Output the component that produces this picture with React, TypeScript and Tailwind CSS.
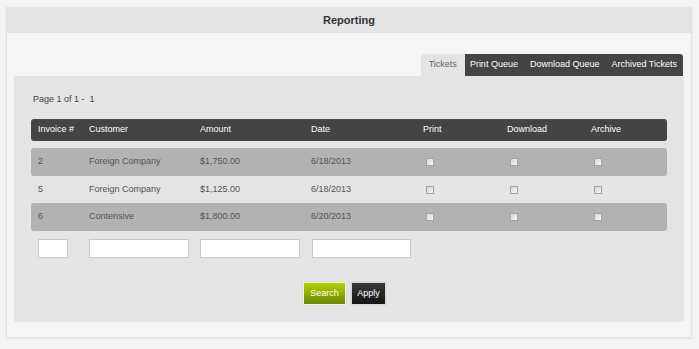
const font = { fontFamily: '"Liberation Sans", Arial, sans-serif' };

interface Ticket {
  invoice: string;
  customer: string;
  amount: string;
  date: string;
}

const tickets: Ticket[] = [
  { invoice: '2', customer: 'Foreign Company', amount: '$1,750.00', date: '6/18/2013' },
  { invoice: '5', customer: 'Foreign Company', amount: '$1,125.00', date: '6/18/2013' },
  { invoice: '6', customer: 'Contensive', amount: '$1,800.00', date: '6/20/2013' },
];

const tabs = ['Print Queue', 'Download Queue', 'Archived Tickets'];

function Box() {
  return (
    <span className="block w-[8px] h-[8px] ml-[3px] border border-[#a4a4a4] bg-gradient-to-br from-[#d8d8d8] to-[#f4f4f4]" />
  );
}

export default function App() {
  return (
    <div className="w-[699px] h-[349px] bg-[#f4f3f1] pt-[7px] pl-[6px]" style={font}>
      <div className="w-[686px] h-[331px] bg-[#f6f5f3] border-x border-b border-[#e2e1df] shadow-[0_1px_2px_rgba(0,0,0,0.06)]">
        {/* Header */}
        <div className="h-[26px] bg-[#e4e4e4] flex items-center justify-center text-[11px] font-bold text-[#333]">
          Reporting
        </div>

        <div className="px-[7px] pt-[21px]">
          {/* Tabs */}
          <div className="flex justify-end pr-[1px] h-[22px] text-[9px]">
            <div className="bg-[#e4e4e4] text-[#666] px-[8px] flex items-center rounded-tl-[2px]">Tickets</div>
            <div className="bg-[#444] text-white flex items-center rounded-tr-[3px] pl-[5px] pr-[6px] gap-[12px]">
              {tabs.map((t) => (
                <span key={t}>{t}</span>
              ))}
            </div>
          </div>

          {/* Content box */}
          <div className="h-[246px] bg-[#e4e4e4] rounded-b-[3px] px-[17px] pt-[18px]">
            <div className="text-[9px] text-[#444] pl-[2px] h-[11px] leading-[11px]">Page 1 of 1 -&nbsp; 1</div>

            <div className="mt-[14px] text-[9px]">
              <div className="h-[22px] bg-[#444] rounded-[3px] text-white grid grid-cols-[51px_111px_111px_112px_84px_84px_82px] items-center">
                <span className="pl-[7px]">Invoice #</span>
                <span className="pl-[7px]">Customer</span>
                <span className="pl-[7px]">Amount</span>
                <span className="pl-[7px]">Date</span>
                <span className="pl-[7px]">Print</span>
                <span className="pl-[7px]">Download</span>
                <span className="pl-[7px]">Archive</span>
              </div>

              <div className="mt-[7px] flex flex-col gap-[1px]">
                {tickets.map((t, i) => (
                  <div
                    key={t.invoice}
                    className={
                      i % 2 === 0
                        ? 'h-[28px] bg-[#b2b2b2] rounded-[3px] text-[#555] grid grid-cols-[51px_111px_111px_112px_84px_84px_82px] items-center'
                        : 'h-[25px] text-[#555] grid grid-cols-[51px_111px_111px_112px_84px_84px_82px] items-center'
                    }
                  >
                    <span className="pl-[7px]">{t.invoice}</span>
                    <span className="pl-[7px]">{t.customer}</span>
                    <span className="pl-[7px]">{t.amount}</span>
                    <span className="pl-[7px]">{t.date}</span>
                    <span className="pl-[7px]"><Box /></span>
                    <span className="pl-[7px]"><Box /></span>
                    <span className="pl-[7px]"><Box /></span>
                  </div>
                ))}
              </div>

              {/* Filter inputs */}
              <div className="mt-[8px] flex h-[19px]">
                <input className="ml-[7px] w-[30px] h-[19px] bg-white border border-[#c9c9c9] outline-none" />
                <input className="ml-[21px] w-[100px] h-[19px] bg-white border border-[#c9c9c9] outline-none" />
                <input className="ml-[11px] w-[100px] h-[19px] bg-white border border-[#c9c9c9] outline-none" />
                <input className="ml-[12px] w-[99px] h-[19px] bg-white border border-[#c9c9c9] outline-none" />
              </div>

              {/* Buttons */}
              <div className="mt-[24px] flex justify-center gap-[5px] pr-[9px]">
                <button className="w-[43px] h-[23px] text-[9px] text-white border border-[#f0f4d8] bg-gradient-to-b from-[#b5d000] to-[#6c8a00] shadow-[0_0_1px_rgba(0,0,0,0.2)]">
                  Search
                </button>
                <button className="w-[35px] h-[23px] text-[9px] text-white border border-[#d8d8d8] bg-gradient-to-b from-[#3a3a3a] to-[#161616] shadow-[0_0_1px_rgba(0,0,0,0.2)]">
                  Apply
                </button>
              </div>
            </div>
          </div>
        </div>
      </div>
    </div>
  );
}
